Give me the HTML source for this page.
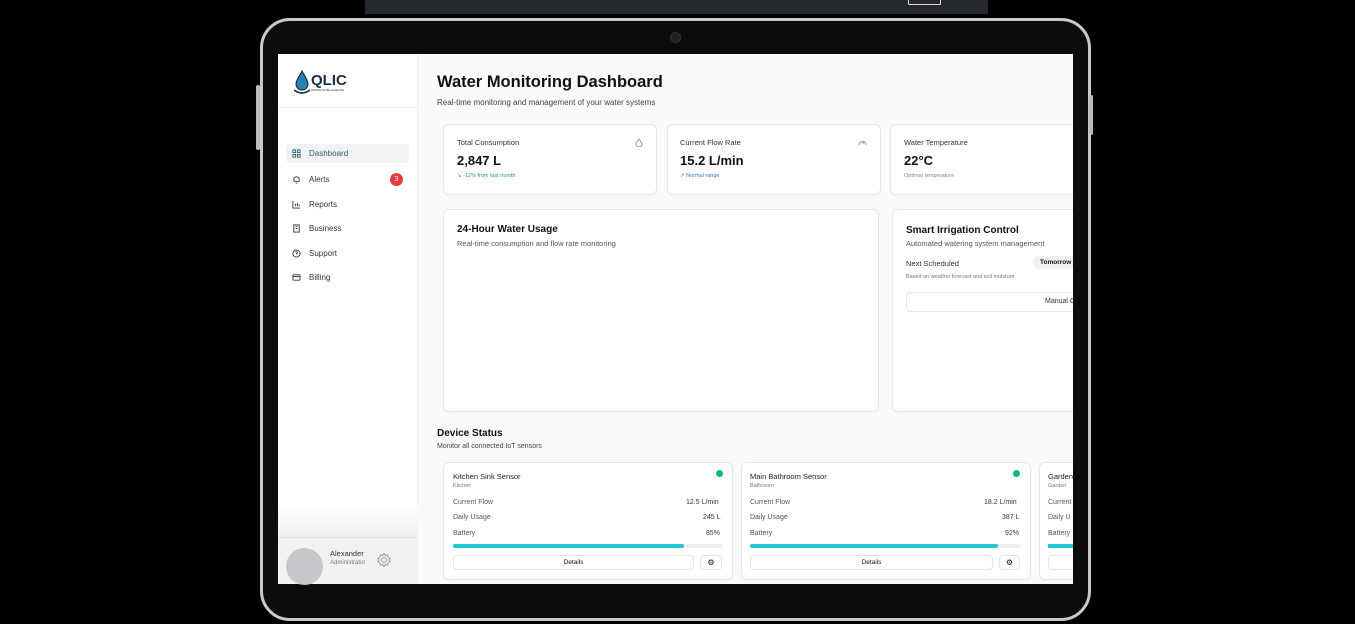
<!DOCTYPE html>
<html><head><meta charset="utf-8"><style>
*{margin:0;padding:0;box-sizing:border-box}
body{width:1355px;height:624px;background:#000;position:relative;overflow:hidden;font-family:"Liberation Sans",sans-serif;color:#111}
.a{position:absolute}
.t{position:absolute;white-space:nowrap}
.card{position:absolute;background:#fff;border:1px solid #e6e7e9;border-radius:6px;box-shadow:0 1px 2px rgba(0,0,0,.04)}
.nav{position:absolute;left:292px;font-size:8px;color:#333;display:flex;align-items:center;gap:8px}
.nav svg{width:9px;height:9px}
</style></head><body>
<div class="a" style="left:365px;top:0;width:623px;height:14px;background:#25282e"></div>
<div class="a" style="left:908px;top:-2px;width:33px;height:7px;border:1px solid #ddd;border-radius:1px"></div>
<div class="a" style="left:260px;top:18px;width:831px;height:603px;border:3px solid #c9c9c9;border-radius:30px;background:#0c0c0c"></div>
<div class="a" style="left:670px;top:32px;width:11px;height:11px;border-radius:50%;background:#222;border:1px solid #333"></div>
<div class="a" style="left:256px;top:85px;width:4px;height:65px;background:#bbb;border-radius:2px"></div>
<div class="a" style="left:1089px;top:95px;width:4px;height:40px;background:#bbb;border-radius:2px"></div>
<div class="a" style="left:278px;top:54px;width:795px;height:530px;background:#fafafa;overflow:hidden">
 <div class="a" style="left:0;top:0;width:140px;height:530px;background:#fff;border-right:1px solid #eee"></div>
</div>
<svg class="a" style="left:294px;top:70px" width="16" height="26" viewBox="0 0 16 26"><path d="M8 1 C5 7 2 10 2 14 a6 6 0 0 0 12 0 C14 10 11 7 8 1Z" fill="#2a7fb8" stroke="#123" stroke-width="1"/><path d="M0 20 q8 6 16 0" stroke="#123" stroke-width="1.5" fill="none"/></svg>
<div class="t" style="left:311px;top:72px;font-size:15px;font-weight:bold;color:#1a2b44">QLIC</div>
<div class="t" style="left:311px;top:88px;font-size:3px;color:#333">WATER INTELLIGENCE</div>
<div class="a" style="left:278px;top:107px;width:140px;height:1px;background:#eee"></div>
<div class="a" style="left:286px;top:144px;width:123px;height:19px;background:#f1f3f4;border-radius:4px"></div>
<div class="nav" style="top:149px;color:#2a5d6e"><svg viewBox="0 0 10 10" fill="none" stroke="#2a5d6e"><rect x="1" y="1" width="3" height="3"/><rect x="6" y="1" width="3" height="3"/><rect x="1" y="6" width="3" height="3"/><rect x="6" y="6" width="3" height="3"/></svg>Dashboard</div>
<div class="nav" style="top:175px"><svg viewBox="0 0 10 10" fill="none" stroke="#333"><path d="M2 7 V5 a3 3 0 0 1 6 0 V7 H2 M4 9 h2"/></svg>Alerts</div>
<div class="a" style="left:390px;top:173px;width:13px;height:13px;border-radius:50%;background:#e53e3e;color:#fff;font-size:7px;text-align:center;line-height:13px">3</div>
<div class="nav" style="top:200px"><svg viewBox="0 0 10 10" fill="none" stroke="#333"><path d="M1 1 V9 H9 M4 7 V4 M6 7 V3 M8 7 V5"/></svg>Reports</div>
<div class="nav" style="top:224px"><svg viewBox="0 0 10 10" fill="none" stroke="#333"><rect x="2" y="1" width="6" height="8"/><path d="M4 3h2M4 5h2"/></svg>Business</div>
<div class="nav" style="top:249px"><svg viewBox="0 0 10 10" fill="none" stroke="#333"><circle cx="5" cy="5" r="4"/><path d="M4 4 a1 1 0 1 1 1 1 v1"/></svg>Support</div>
<div class="nav" style="top:273px"><svg viewBox="0 0 10 10" fill="none" stroke="#333"><rect x="1" y="2" width="8" height="6" rx="1"/><path d="M1 4 h8"/></svg>Billing</div>
<div class="a" style="left:278px;top:505px;width:140px;height:32px;background:linear-gradient(#fff,#f0f0f0)"></div>
<div class="a" style="left:278px;top:537px;width:140px;height:47px;background:#f2f2f2;border-top:1px solid #e5e5e5"></div>
<div class="a" style="left:286px;top:548px;width:37px;height:37px;border-radius:50%;background:#c5c7cb"></div>
<div class="t" style="left:330px;top:549px;font-size:7.5px;color:#333">Alexander</div>
<div class="t" style="left:330px;top:560px;font-size:6px;color:#777">Administrator</div>
<svg class="a" style="left:376px;top:552px" width="16" height="16" viewBox="0 0 16 16" fill="none" stroke="#999"><circle cx="8" cy="8" r="2.5"/><path d="M8 1.5l1.3 2 2.3-.6.6 2.3 2 1.3-1.2 1.5 1.2 1.5-2 1.3-.6 2.3-2.3-.6L8 14.5l-1.3-2-2.3.6-.6-2.3-2-1.3L3 8 1.8 6.5l2-1.3.6-2.3 2.3.6z"/></svg>
<div class="t" style="left:437px;top:73px;font-size:16.5px;font-weight:bold;color:#111">Water Monitoring Dashboard</div>
<div class="t" style="left:437px;top:98px;font-size:8px;color:#444">Real-time monitoring and management of your water systems</div>
<div class="a" style="left:443px;top:124px;width:630px;height:460px;overflow:hidden">
 <div class="card" style="left:0;top:0;width:214px;height:71px"></div>
 <div class="card" style="left:224px;top:0;width:214px;height:71px"></div>
 <div class="card" style="left:447px;top:0;width:214px;height:71px"></div>
 <div class="card" style="left:0;top:85px;width:436px;height:203px"></div>
 <div class="card" style="left:449px;top:85px;width:214px;height:203px"></div>
 <div class="card" style="left:0;top:338px;width:290px;height:118px"></div>
 <div class="card" style="left:298px;top:338px;width:290px;height:118px"></div>
 <div class="card" style="left:596px;top:338px;width:290px;height:118px"></div>
 <div class="t" style="left:461px;top:14px;font-size:7.5px;color:#333">Water Temperature</div>
 <div class="t" style="left:461px;top:29px;font-size:13px;font-weight:bold">22°C</div>
 <div class="t" style="left:461px;top:49px;font-size:5.5px;color:#888">Optimal temperature</div>
 <div class="t" style="left:463px;top:101px;font-size:10px;font-weight:bold">Smart Irrigation Control</div>
 <div class="t" style="left:463px;top:115px;font-size:7.5px;color:#555">Automated watering system management</div>
 <div class="t" style="left:463px;top:135px;font-size:7.5px;color:#333">Next Scheduled</div>
 <div class="a" style="left:590px;top:132px;width:60px;height:13px;background:#f1f1f1;border-radius:7px"></div>
 <div class="t" style="left:597px;top:135px;font-size:6.5px;font-weight:bold">Tomorrow 6</div>
 <div class="t" style="left:463px;top:150px;font-size:5.5px;color:#777">Based on weather forecast and soil moisture</div>
 <div class="a" style="left:463px;top:168px;width:200px;height:20px;border:1px solid #e5e5e5;border-radius:4px;background:#fff"></div>
 <div class="t" style="left:602px;top:174px;font-size:7px;color:#333">Manual C</div>
 <div class="t" style="left:307px;top:348px;font-size:7.5px;color:#222">Main Bathroom Sensor</div>
 <div class="t" style="left:307px;top:359px;font-size:5.5px;color:#777">Bathroom</div>
 <div class="a" style="left:570px;top:346px;width:7px;height:7px;border-radius:50%;background:#10b981"></div>
 <div class="t" style="left:307px;top:375px;font-size:7px;color:#555">Current Flow</div><div class="t" style="left:541px;top:375px;font-size:7px;color:#333">18.2 L/min</div>
 <div class="t" style="left:307px;top:390px;font-size:7px;color:#555">Daily Usage</div><div class="t" style="left:559px;top:390px;font-size:7px;color:#333">387 L</div>
 <div class="t" style="left:307px;top:406px;font-size:7px;color:#555">Battery</div><div class="t" style="left:562px;top:406px;font-size:7px;color:#333">92%</div>
 <div class="a" style="left:307px;top:420px;width:270px;height:4px;background:#eee;border-radius:2px"><div style="width:92%;height:4px;background:#22c5d3;border-radius:2px"></div></div>
 <div class="a" style="left:307px;top:431px;width:243px;height:15px;border:1px solid #e5e5e5;border-radius:4px;font-size:6.5px;text-align:center;line-height:13px">Details</div>
 <div class="a" style="left:556px;top:431px;width:21px;height:15px;border:1px solid #e5e5e5;border-radius:4px;font-size:8px;text-align:center;line-height:13px">⚙</div>
 <div class="t" style="left:605px;top:348px;font-size:7.5px;color:#222">Garden</div>
 <div class="t" style="left:605px;top:359px;font-size:5.5px;color:#777">Garden</div>
 <div class="t" style="left:605px;top:375px;font-size:7px;color:#555">Current</div>
 <div class="t" style="left:605px;top:390px;font-size:7px;color:#555">Daily U</div>
 <div class="t" style="left:605px;top:406px;font-size:7px;color:#555">Battery</div>
 <div class="a" style="left:605px;top:420px;width:40px;height:4px;background:#22c5d3"></div>
 <div class="a" style="left:605px;top:431px;width:40px;height:15px;border:1px solid #e5e5e5;border-radius:4px"></div>
</div>
<div class="t" style="left:457px;top:138px;font-size:7.5px;color:#333">Total Consumption</div>
<svg class="a" style="left:635px;top:138px" width="8" height="9" viewBox="0 0 8 9" fill="none" stroke="#999"><path d="M4 1 C2 4 1 5 1 6 a3 3 0 0 0 6 0 C7 5 6 4 4 1Z"/></svg>
<div class="t" style="left:457px;top:153px;font-size:13px;font-weight:bold">2,847 L</div>
<div class="t" style="left:457px;top:173px;font-size:5.5px;color:#22a45a">↘ -12% from last month</div>
<div class="t" style="left:680px;top:138px;font-size:7.5px;color:#333">Current Flow Rate</div>
<svg class="a" style="left:858px;top:138px" width="9" height="8" viewBox="0 0 9 8" fill="none" stroke="#999"><path d="M1 7 a3.5 3.5 0 1 1 7 0 M4.5 6 L6 3"/></svg>
<div class="t" style="left:680px;top:153px;font-size:13px;font-weight:bold">15.2 L/min</div>
<div class="t" style="left:680px;top:173px;font-size:5.5px;color:#3b6fd1">↗ Normal range</div>
<div class="t" style="left:457px;top:224px;font-size:10px;font-weight:bold">24-Hour Water Usage</div>
<div class="t" style="left:457px;top:239px;font-size:7.5px;color:#555">Real-time consumption and flow rate monitoring</div>
<div class="t" style="left:437px;top:428px;font-size:10px;font-weight:bold">Device Status</div>
<div class="t" style="left:437px;top:443px;font-size:7px;color:#444">Monitor all connected IoT sensors</div>
<div class="t" style="left:453px;top:472px;font-size:7.5px;color:#222">Kitchen Sink Sensor</div>
<div class="t" style="left:453px;top:483px;font-size:5.5px;color:#777">Kitchen</div>
<div class="a" style="left:716px;top:470px;width:7px;height:7px;border-radius:50%;background:#10b981"></div>
<div class="t" style="left:453px;top:499px;font-size:7px;color:#555">Current Flow</div><div class="t" style="left:686px;top:499px;font-size:7px;color:#333">12.5 L/min</div>
<div class="t" style="left:453px;top:514px;font-size:7px;color:#555">Daily Usage</div><div class="t" style="left:703px;top:514px;font-size:7px;color:#333">245 L</div>
<div class="t" style="left:453px;top:530px;font-size:7px;color:#555">Battery</div><div class="t" style="left:706px;top:530px;font-size:7px;color:#333">85%</div>
<div class="a" style="left:453px;top:544px;width:269px;height:4px;background:#eee;border-radius:2px"><div style="width:86%;height:4px;background:#22c5d3;border-radius:2px"></div></div>
<div class="a" style="left:453px;top:555px;width:241px;height:15px;border:1px solid #e5e5e5;border-radius:4px;font-size:6.5px;text-align:center;line-height:13px;background:#fff">Details</div>
<div class="a" style="left:700px;top:555px;width:22px;height:15px;border:1px solid #e5e5e5;border-radius:4px;font-size:8px;text-align:center;line-height:13px;background:#fff">⚙</div>
</body></html>
